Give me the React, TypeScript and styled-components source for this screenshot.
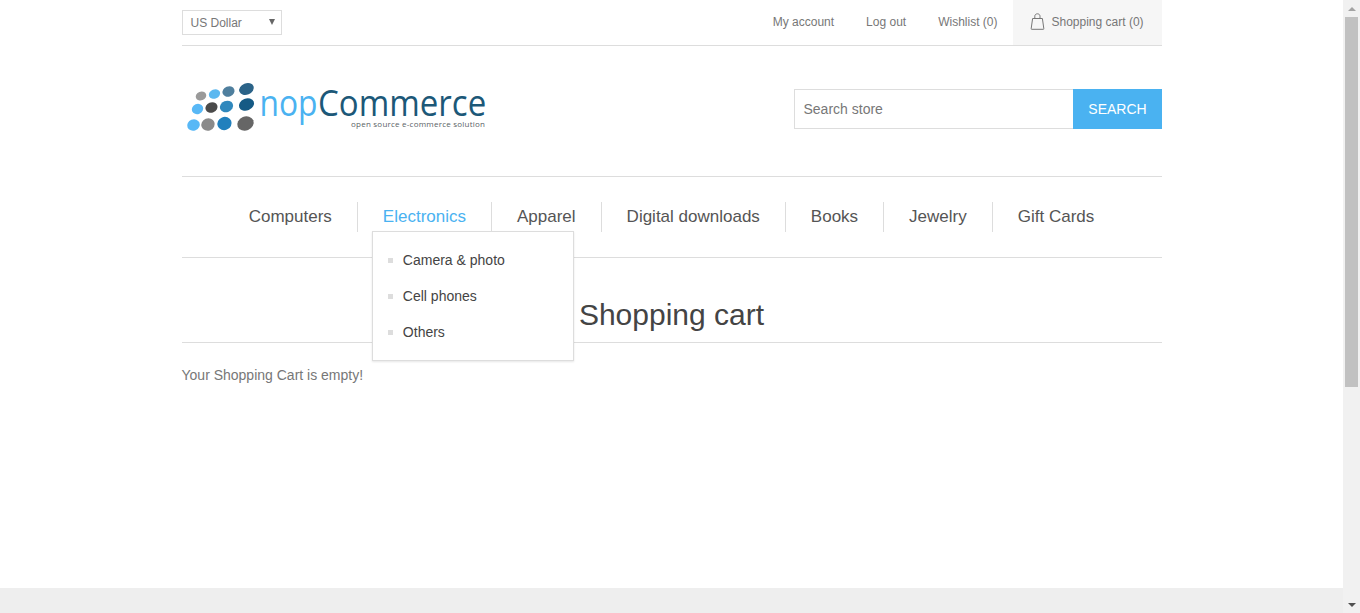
import React from 'react';
import styled, { createGlobalStyle } from 'styled-components';

const navItems = ['Computers', 'Electronics', 'Apparel', 'Digital downloads', 'Books', 'Jewelry', 'Gift Cards'];
const subItems = ['Camera & photo', 'Cell phones', 'Others'];
const headerLinks = ['My account', 'Log out', 'Wishlist (0)'];

const dots = [
  { cx: 26, cy: 26, rx: 5.4, ry: 4.4, fill: '#9a9a9a' },
  { cx: 39.5, cy: 24, rx: 5.8, ry: 4.6, fill: '#5cb8f0' },
  { cx: 53.5, cy: 21.5, rx: 6.2, ry: 5, fill: '#4f7f9e' },
  { cx: 71.5, cy: 19, rx: 7.6, ry: 5.6, fill: '#2b6388' },
  { cx: 22.5, cy: 39, rx: 5.8, ry: 5, fill: '#58b8f6' },
  { cx: 36.5, cy: 37.5, rx: 6.2, ry: 5.2, fill: '#4a4a4a' },
  { cx: 51.5, cy: 36.5, rx: 6.8, ry: 5.6, fill: '#2f88bd' },
  { cx: 71.5, cy: 34.5, rx: 7.8, ry: 6, fill: '#155a85' },
  { cx: 18.5, cy: 55, rx: 6.4, ry: 5.6, fill: '#58b8f6' },
  { cx: 33, cy: 54.5, rx: 6.8, ry: 6.2, fill: '#8a8a8a' },
  { cx: 49.5, cy: 53.5, rx: 7.2, ry: 6.6, fill: '#2180bd' },
  { cx: 70.5, cy: 53.5, rx: 8.4, ry: 7, fill: '#666666' },
];

const GlobalStyle = createGlobalStyle`
  html, body {
    margin: 0;
    padding: 0;
    height: 100%;
    overflow: hidden;
    background: #fff;
  }
  * {
    box-sizing: border-box;
  }
  #root {
    height: 100%;
    font-family: "Liberation Sans", Arial, sans-serif;
  }
`;

const Viewport = styled.div`
  display: flex;
  height: 613px;
`;

const Page = styled.div`
  flex: 1;
  min-width: 0;
  display: flex;
  flex-direction: column;
`;

const Master = styled.div`
  width: 980px;
  margin: 0 auto;
  flex: 1;
`;

const TopBar = styled.div`
  display: flex;
  justify-content: space-between;
  height: 46px;
  border-bottom: 1px solid #ddd;
`;

const CurrencySelect = styled.div`
  width: 100px;
  height: 25px;
  margin-top: 10px;
  padding-left: 8px;
  display: flex;
  justify-content: space-between;
  align-items: center;
  border: 1px solid #ddd;
  font-size: 12px;
  color: #777;
`;

const SelectArrow = styled.span`
  width: 0;
  height: 0;
  margin: 0 6px 2px 0;
  border-left: 3.5px solid transparent;
  border-right: 3.5px solid transparent;
  border-top: 6px solid #666;
`;

const HeaderLinks = styled.div`
  display: flex;
  align-items: center;
`;

const HeaderLink = styled.a`
  margin: 0 32px 2px 0;
  font-size: 12px;
  color: #777;

  &:nth-child(3) {
    margin-right: 15px;
  }
`;

const CartLink = styled.a`
  width: 149px;
  height: 45px;
  padding: 0 0 2px 17px;
  display: flex;
  align-items: center;
  gap: 7px;
  background: #f6f6f6;
  font-size: 12px;
  color: #777;
`;

const HeaderMain = styled.div`
  display: flex;
  justify-content: space-between;
  height: 130px;
`;

const Logo = styled.svg`
  display: block;
  margin-top: 24px;
  width: 310px;
  height: 70px;
  font-family: "Open Sans", sans-serif;
`;

const SearchForm = styled.div`
  display: flex;
  margin-top: 43px;
  height: 40px;
`;

const SearchInput = styled.div`
  width: 279px;
  padding-left: 9px;
  display: flex;
  align-items: center;
  border: 1px solid #ddd;
  border-right: 0;
  font-size: 14px;
  color: #777;
`;

const SearchButton = styled.div`
  width: 89px;
  padding-left: 1px;
  display: flex;
  align-items: center;
  justify-content: center;
  background: #4ab2f1;
  font-size: 14px;
  color: #fff;
`;

const Nav = styled.ul`
  display: flex;
  justify-content: center;
  margin: 0;
  padding: 25px 0;
  height: 82px;
  list-style: none;
  border-top: 1px solid #ddd;
  border-bottom: 1px solid #ddd;
`;

const NavItem = styled.li<{ $first: boolean; $active: boolean }>`
  position: relative;
  height: 30px;
  padding: 0 25px;
  line-height: 30px;
  font-size: 17px;
  color: ${({ $active }) => ($active ? '#4ab2f1' : '#555')};
  border-left: ${({ $first }) => ($first ? '0' : '1px solid #ddd')};
`;

const Dropdown = styled.ul`
  position: absolute;
  top: 29px;
  left: 14px;
  z-index: 5;
  width: 202px;
  height: 130px;
  margin: 0;
  padding: 10px 15px;
  list-style: none;
  background: #fff;
  border: 1px solid #ddd;
  box-shadow: 0 1px 2px rgba(0, 0, 0, 0.1);
`;

const DropdownItem = styled.li`
  height: 36px;
  display: flex;
  align-items: center;
  gap: 10px;
  font-size: 14px;
  color: #444;

  &::before {
    content: '';
    width: 5px;
    height: 5px;
    background: #ddd;
  }
`;

const PageTitle = styled.div`
  height: 85px;
  padding-top: 39px;
  border-bottom: 1px solid #ddd;
  text-align: center;
  font-size: 30px;
  line-height: 36px;
  color: #444;
`;

const EmptyNote = styled.div`
  margin-top: 24px;
  font-size: 14px;
  line-height: 16px;
  color: #777;
`;

const Footer = styled.div`
  height: 25px;
  background: #eee;
`;

const Scrollbar = styled.div`
  width: 17px;
  display: flex;
  flex-direction: column;
  align-items: center;
  background: #f1f1f1;
`;

const ScrollButton = styled.div`
  height: 17px;
  width: 100%;
  display: flex;
  align-items: center;
  justify-content: center;
`;

const ArrowUp = styled.span`
  width: 0;
  height: 0;
  border-left: 4px solid transparent;
  border-right: 4px solid transparent;
  border-bottom: 4px solid #a3a3a3;
`;

const ArrowDown = styled.span`
  width: 0;
  height: 0;
  border-left: 4px solid transparent;
  border-right: 4px solid transparent;
  border-top: 4px solid #505050;
`;

const Thumb = styled.div`
  width: 13px;
  height: 370px;
  background: #c1c1c1;
`;

const ScrollTrack = styled.div`
  flex: 1;
`;

const CartIcon = () => (
  <svg width="15" height="17" viewBox="0 0 15 17" fill="none" stroke="#777" strokeWidth="1">
    <path d="M2.6 5.5h9.8l1.4 10a.6.6 0 0 1-.6.8H1.8a.6.6 0 0 1-.6-.8z" />
    <path d="M4.8 5.5V3.2C4.8 1.8 5.9.8 7.4.8s2.6 1 2.6 2.4v2.3" />
  </svg>
);

export default function App() {
  return (
    <>
      <GlobalStyle />
      <Viewport>
        <Page>
          <Master>
            <TopBar>
              <CurrencySelect>
                US Dollar
                <SelectArrow />
              </CurrencySelect>
              <HeaderLinks>
                {headerLinks.map((link) => (
                  <HeaderLink key={link}>{link}</HeaderLink>
                ))}
                <CartLink>
                  <CartIcon />
                  Shopping cart (0)
                </CartLink>
              </HeaderLinks>
            </TopBar>
            <HeaderMain>
              <Logo viewBox="0 0 310 70">
                {dots.map((dot, i) => (
                  <ellipse
                    key={i}
                    cx={dot.cx - 7}
                    cy={dot.cy}
                    rx={dot.rx}
                    ry={dot.ry}
                    fill={dot.fill}
                    transform={`rotate(-22 ${dot.cx - 7} ${dot.cy})`}
                  />
                ))}
                <text transform="translate(77.5 46) scale(0.87 1)" fontSize="36.5" fill="#4ab2f1">
                  nop
                </text>
                <text transform="translate(136 46) scale(0.905 1)" fontSize="36.5" fill="#1c5878">
                  Commerce
                </text>
                <text x="169" y="56.5" fontSize="8" fill="#5a5f66" textLength="134">
                  open source e-commerce solution
                </text>
              </Logo>
              <SearchForm>
                <SearchInput>Search store</SearchInput>
                <SearchButton>SEARCH</SearchButton>
              </SearchForm>
            </HeaderMain>
            <Nav>
              {navItems.map((item, i) => (
                <NavItem key={item} $first={i === 0} $active={item === 'Electronics'}>
                  {item}
                  {item === 'Electronics' && (
                    <Dropdown>
                      {subItems.map((sub) => (
                        <DropdownItem key={sub}>{sub}</DropdownItem>
                      ))}
                    </Dropdown>
                  )}
                </NavItem>
              ))}
            </Nav>
            <PageTitle>Shopping cart</PageTitle>
            <EmptyNote>Your Shopping Cart is empty!</EmptyNote>
          </Master>
          <Footer />
        </Page>
        <Scrollbar>
          <ScrollButton>
            <ArrowUp />
          </ScrollButton>
          <Thumb />
          <ScrollTrack />
          <ScrollButton>
            <ArrowDown />
          </ScrollButton>
        </Scrollbar>
      </Viewport>
    </>
  );
}
